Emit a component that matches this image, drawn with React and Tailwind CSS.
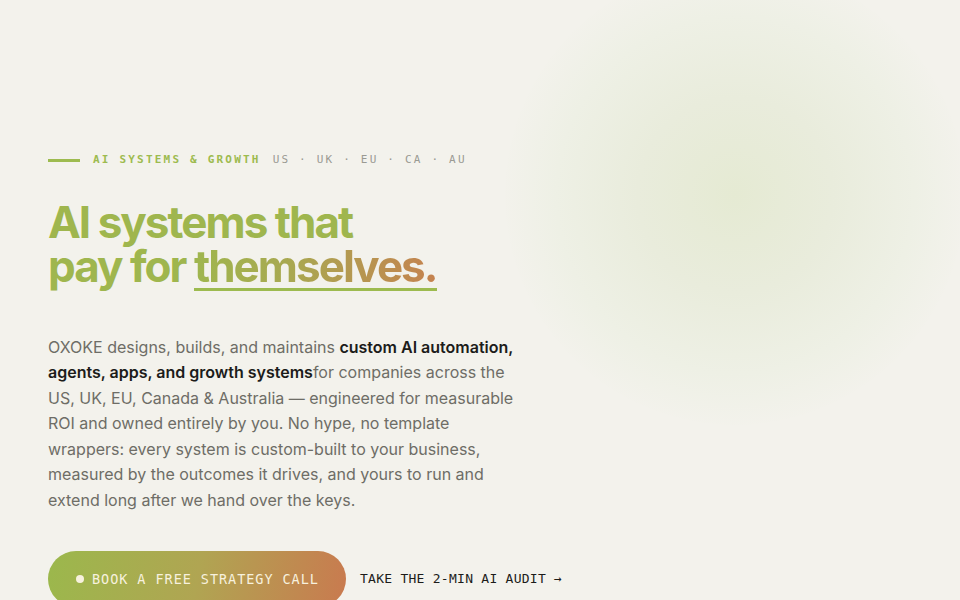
export default function App() {
  const mono = { fontFamily: '"DejaVu Sans Mono", "Liberation Mono", monospace' };
  return (
    <div
      className="relative w-[960px] h-[600px] overflow-hidden bg-[#f3f2ec]"
      style={{ fontFamily: 'Inter, "Noto Sans", sans-serif' }}
    >
      {/* soft blob */}
      <div className="absolute left-[505px] top-[-35px] w-[460px] h-[460px] rounded-full bg-[radial-gradient(circle_at_center,#e5ead3_0%,#e9ecdc_30%,#eef0e5_55%,#f3f2ec_72%)]" />

      <div className="relative flex flex-col pl-12 pt-[152px]">
        <div className="flex items-center text-[11px] tracking-[0.2em]" style={mono}>
          <span className="w-8 h-[3px] bg-[#9dbb4f] mr-[13px]" />
          <span className="font-bold text-[#9dbb4f]">AI SYSTEMS &amp; GROWTH</span>
          <span className="ml-3 text-[#9a9a93]">US · UK · EU · CA · AU</span>
        </div>

        <h1 className="mt-[31px] text-[44px] leading-[44px] font-bold tracking-[-0.045em] text-[#9fb64e]">
          <span className="block">AI systems that</span>
          <span className="block">
            pay for{" "}
            <span className="relative inline-block bg-[linear-gradient(90deg,#9fb64e_0%,#a9a851_40%,#c5824f_100%)] bg-clip-text text-transparent">
              themselves.
              <span className="absolute left-0 right-0 bottom-[-3px] h-[3px] bg-[#9dbb4f]" />
            </span>
          </span>
        </h1>

        <p className="mt-[47px] w-[480px] text-[16px] leading-[25.5px] text-[#6e6d66]">
          OXOKE designs, builds, and maintains{" "}
          <span className="font-semibold text-[#1c1c1a]">custom AI automation,</span>
          <br />
          <span className="font-semibold text-[#1c1c1a]">agents, apps, and growth systems</span>
          for companies across the
          <br />
          US, UK, EU, Canada &amp; Australia — engineered for measurable
          <br />
          ROI and owned entirely by you. No hype, no template
          <br />
          wrappers: every system is custom-built to your business,
          <br />
          measured by the outcomes it drives, and yours to run and
          <br />
          extend long after we hand over the keys.
        </p>

        <div className="mt-[38px] flex items-center" style={mono}>
          <button className="flex items-center h-[56px] w-[298px] rounded-full pl-[28px] bg-[linear-gradient(100deg,#9bb84c_0%,#b0a552_50%,#c97a4f_100%)] text-[13.5px] tracking-[0.07em] text-[#f7f1de] whitespace-nowrap">
            <span className="w-2 h-2 rounded-full bg-[#f7f1de] mr-2" />
            BOOK A FREE STRATEGY CALL
          </button>
          <a className="ml-[14px] text-[13px] tracking-[0.02em] text-[#1c1c1a] whitespace-nowrap">
            TAKE THE 2-MIN AI AUDIT →
          </a>
        </div>
      </div>
    </div>
  );
}
